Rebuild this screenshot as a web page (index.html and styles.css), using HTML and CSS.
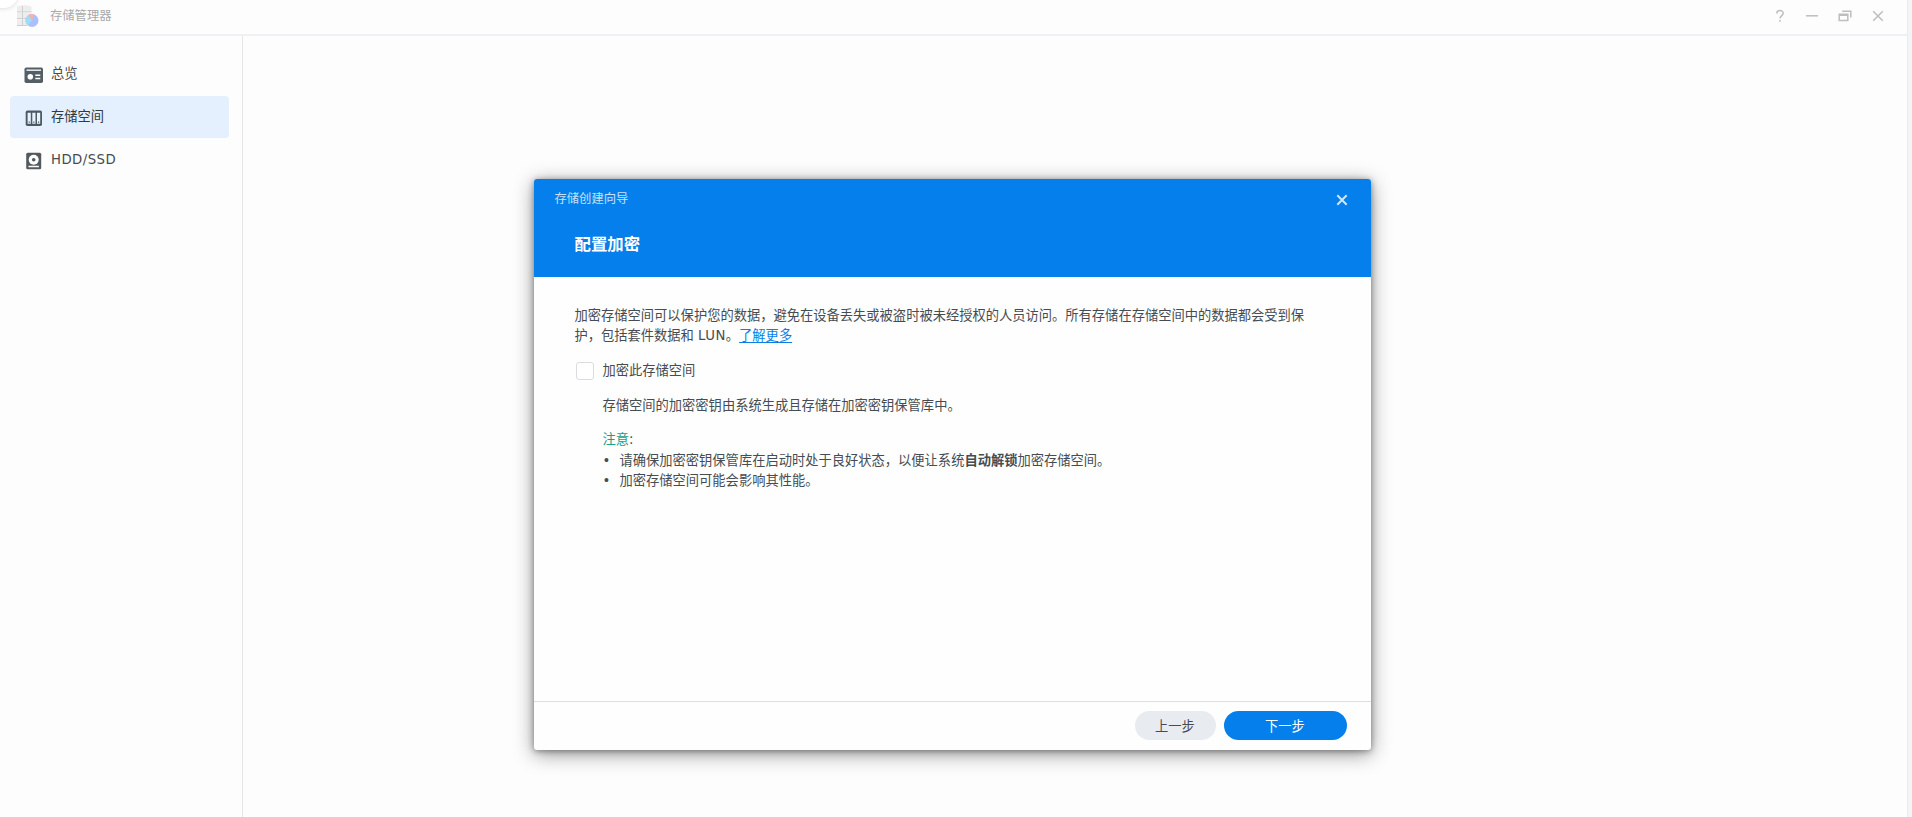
FILE: index.html
```html
<!DOCTYPE html>
<html lang="zh-CN">
<head>
  <meta charset="UTF-8">
  <meta name="viewport" content="width=device-width, initial-scale=1">
  <title>存储管理器</title>
  <link rel="stylesheet" href="styles.css">
</head>
<body>
  <div class="window">
    <header class="titlebar">
      <svg class="app-icon" width="24" height="24" viewBox="0 0 24 24">
        <path d="M2 2.5Q9 0 16.5 2.5V7.5H2zM2 8.5h14.5v6H2zM2 15.5h14.5v6H2z" fill="#ededed"/>
        <path d="M2 7.8h14.5M2 14.5h14.5M2 21.5h10M7.5 2v19" stroke="#cfcfcf" stroke-width="1" fill="none"/>
        <circle cx="17" cy="16.5" r="6.5" fill="#a9c0fb"/>
        <path d="M17 16.5L13 11.3A6.5 6.5 0 0 1 19 10.3z" fill="#fcb0a8"/>
        <path d="M17 16.5L13 11.3A6.5 6.5 0 0 0 13 21.6z" fill="#9edcf8"/>
      </svg>
      <h1>存储管理器</h1>
      <div class="window-tools">
        <svg width="12" height="14" viewBox="0 0 12 14"><path d="M2.8 4.4C2.8 0.6 9.2 0.6 9.2 4.3C9.2 6.6 6 6.6 6 9.5M6 11v1.8"/></svg>
        <svg width="12" height="14" viewBox="0 0 12 14"><path d="M0 6.8h12"/></svg>
        <svg width="14" height="14" viewBox="0 0 14 14"><path d="M1.2 5.2h8.6v6.3H1.2zM1.2 6.3h8.6M4.2 2.3h8.6v6.2"/></svg>
        <svg width="12" height="14" viewBox="0 0 12 14"><path d="M1.2 2.2l9.6 9.6M10.8 2.2L1.2 11.8"/></svg>
      </div>
    </header>

    <div class="content">
      <nav class="sidebar">
        <a class="nav-item">
          <svg width="20" height="18" viewBox="0 0 20 18">
            <rect x="0.5" y="1.5" width="18.5" height="15.5" rx="1.8" fill="#535e65"/>
            <path d="M2.5 4.2h14.5" stroke="#e8ebec" stroke-width="1.5"/>
            <circle cx="6.3" cy="10.8" r="2.8" fill="#fff"/>
            <path d="M11.3 9.3h5M11.3 12.5h5" stroke="#fff" stroke-width="1.4"/>
          </svg>
          <span>总览</span>
        </a>
        <a class="nav-item active">
          <svg width="20" height="18" viewBox="0 0 20 18">
            <rect x="1.7" y="1.5" width="16.3" height="15.5" rx="1.8" fill="#4c5962"/>
            <path d="M3.6 3.8h3.2v11H3.6zM8.3 3.8h3.2v11H8.3zM13 3.8h3.2v11H13z" fill="#e6f2ff"/>
            <path d="M4.6 13.1h1.2M9.3 13.1h1.2M14 13.1h1.2" stroke="#4c5962" stroke-width="1.3"/>
          </svg>
          <span>存储空间</span>
        </a>
        <a class="nav-item">
          <svg width="20" height="18" viewBox="0 0 20 18">
            <rect x="2.2" y="0.7" width="15" height="16.6" rx="1.5" fill="#525a60"/>
            <circle cx="9.7" cy="7.8" r="5" fill="#fff"/>
            <circle cx="9.7" cy="7.8" r="1.8" fill="#525a60"/>
            <path d="M4.5 14.5h10.4" stroke="#fff" stroke-width="1.5"/>
          </svg>
          <span class="latin">HDD/SSD</span>
        </a>
      </nav>

      <main class="workspace">
        <section class="wizard">
          <div class="wizard-header">
            <div class="wizard-title">
              <span>存储创建向导</span>
              <svg width="12" height="12" viewBox="0 0 12 12"><path d="M1.3 1.3l9.4 9.4M10.7 1.3L1.3 10.7"/></svg>
            </div>
            <h2>配置加密</h2>
          </div>
          <div class="wizard-body">
            <p>加密存储空间可以保护您的数据，避免在设备丢失或被盗时被未经授权的人员访问。所有存储在存储空间中的数据都会受到保护，包括套件数据和 <span class="latin">LUN</span>。<a class="link">了解更多</a></p>
            <label class="encrypt">
              <span class="checkbox"></span>
              <span>加密此存储空间</span>
            </label>
            <div class="details">
              <p>存储空间的加密密钥由系统生成且存储在加密密钥保管库中。</p>
              <p class="note"><span>注意</span>:</p>
              <ul>
                <li>请确保加密密钥保管库在启动时处于良好状态，以便让系统<b>自动解锁</b>加密存储空间。</li>
                <li>加密存储空间可能会影响其性能。</li>
              </ul>
            </div>
          </div>
          <div class="wizard-footer">
            <button class="btn btn-prev">上一步</button>
            <button class="btn btn-next">下一步</button>
          </div>
        </section>
      </main>
    </div>
  </div>
  <div class="corner"></div>
</body>
</html>
```
FILE: styles.css
```css
* {
  box-sizing: border-box;
}
body {
  margin: 0;
  font-family: "DejaVu Sans", "Noto Sans CJK SC", sans-serif;
  font-size: 13.28px;
  line-height: 20.4px;
  color: #464c51;
  background: #f3f4f5;
  overflow: hidden;
}
h1, h2, p, ul {
  margin: 0;
  padding: 0;
}
.window {
  display: flex;
  flex-direction: column;
  width: 1908px;
  height: 817px;
  background: #fdfdfd;
  border-right: 1px solid #e9ebed;
}
/* rounded edge lying over the window corner */
.corner {
  position: absolute;
  top: -24px;
  left: -16px;
  width: 34px;
  height: 32px;
  border-radius: 14px;
  background: #fff;
  box-shadow: 0 1px 4px rgba(0, 0, 0, 0.12);
}

/* title bar */
.titlebar {
  display: flex;
  align-items: center;
  height: 36px;
  padding: 0 23px 3px 15px;
  border-bottom: 2px solid #eef0f1;
}
.app-icon {
  margin-right: 11px;
}
.titlebar h1 {
  font-family: "Noto Sans CJK SC", sans-serif;
  font-size: 12.3px;
  font-weight: 400;
  color: #a8a9aa;
}
.window-tools {
  display: flex;
  gap: 20px;
  margin-left: auto;
}
.window-tools svg {
  fill: none;
  stroke: #bcbec0;
  stroke-width: 1.5;
}

/* sidebar */
.content {
  display: flex;
  flex: 1;
}
.sidebar {
  display: flex;
  flex-direction: column;
  gap: 1px;
  width: 243px;
  padding: 17px 13px 0 10px;
  border-right: 1px solid #e4e6e8;
}
.nav-item {
  display: flex;
  align-items: center;
  gap: 7px;
  height: 42px;
  padding: 1px 0 0 14px;
  border-radius: 4px;
}
.nav-item.active {
  background: #e4f0fe;
  color: #2f3a43;
}
.latin {
  letter-spacing: 0.45px;
}

/* wizard dialog */
.workspace {
  flex: 1;
  padding: 143px 0 0 290.5px;
}
.wizard {
  display: flex;
  flex-direction: column;
  width: 837px;
  height: 571px;
  background: #fefefe;
  border-radius: 3px;
  box-shadow: 0 4px 20px rgba(0, 0, 0, 0.42), 0 1px 6px rgba(0, 0, 0, 0.38);
}
.wizard-header {
  height: 98px;
  background: #057feb;
  border-radius: 3px 3px 0 0;
  color: #fff;
}
.wizard-title {
  display: flex;
  align-items: center;
  justify-content: space-between;
  height: 41px;
  padding: 0 23px 0 21px;
  font-size: 12.3px;
  color: #c5e1fb;
}
.wizard-title svg {
  fill: none;
  stroke: #cfe6fb;
  stroke-width: 2;
}
.wizard-header h2 {
  padding: 12px 0 0 41px;
  font-size: 16.4px;
  line-height: 26px;
}
.wizard-body {
  flex: 1;
  padding: 29px 62px 0 41px;
}
.link {
  color: #0a7ee6;
  text-decoration: underline;
  text-underline-offset: 2px;
}
.encrypt {
  display: flex;
  align-items: center;
  gap: 9px;
  height: 20px;
  margin: 14px 0 0 1px;
}
.checkbox {
  width: 18px;
  height: 18px;
  border: 1px solid #d9dde1;
  border-radius: 3px;
  background: #fff;
}
.details {
  padding: 15px 0 0 28px;
}
.note {
  margin-top: 14px;
}
.note span {
  color: #16a085;
}
.details ul {
  list-style: none;
}
.details li {
  display: block;
}
.details li::before {
  content: "•";
  display: inline-block;
  width: 17px;
}
.wizard-footer {
  display: flex;
  justify-content: flex-end;
  gap: 8px;
  height: 49px;
  padding: 9px 24px 0 0;
  border-top: 1px solid #dcdfe1;
}
.btn {
  height: 29px;
  padding: 0;
  border: none;
  border-radius: 15px;
  font-family: inherit;
  font-size: 13.28px;
}
.btn-prev {
  width: 81px;
  background: #e8ecf1;
  color: #464c51;
}
.btn-next {
  width: 123px;
  background: #057feb;
  color: #fff;
}
```
